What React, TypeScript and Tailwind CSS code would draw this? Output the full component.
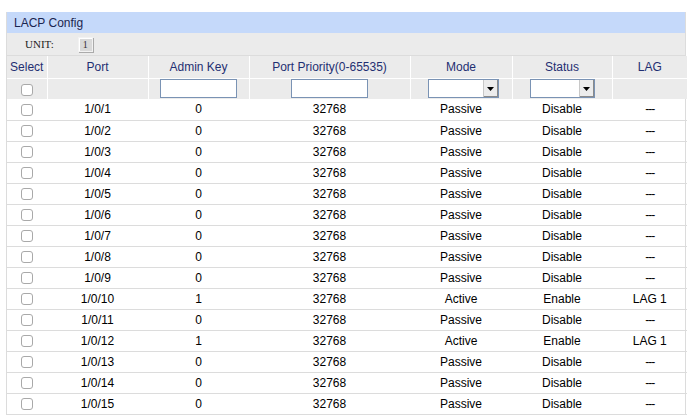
import React from 'react'

type Row = { port: string; key: number; mode: string; status: string; lag: string }

const rows: Row[] = Array.from({ length: 15 }, (_, i) => {
  const n = i + 1
  const active = n === 10 || n === 12
  return {
    port: `1/0/${n}`,
    key: active ? 1 : 0,
    mode: active ? 'Active' : 'Passive',
    status: active ? 'Enable' : 'Disable',
    lag: active ? 'LAG 1' : '---',
  }
})

function Check() {
  return <span className="inline-block w-[12px] h-[12px] rounded-[3px] border border-[#a9a9a9] bg-white align-middle" />
}

function Select({ w }: { w: string }) {
  return (
    <span className={`inline-flex items-stretch h-[19px] border border-[#7a93b4] bg-white align-middle ${w}`}>
      <span className="flex-1" />
      <span className="w-[15px] flex items-center justify-center bg-[#ececec] border-l border-[#c8c8c8] shadow-[inset_-1px_-1px_0_#8a8a8a]">
        <svg width="7" height="4" viewBox="0 0 7 4"><path d="M0 0h7L3.5 4z" fill="#000" /></svg>
      </span>
    </span>
  )
}

const head = 'h-[22px] border-r border-white text-[#1f2f72] font-normal'
const cell = 'h-[21px] border-b border-[#dcdcdc] border-r border-r-white'

export default function App() {
  return (
    <div className="w-[692px] h-[419px] bg-white pt-[12px] pl-[6px] font-['Liberation_Sans',Arial,sans-serif] text-[12px] text-black">
      <div className="w-[680px] border-l border-r border-[#dcdcdc]">
        <div className="h-[21px] bg-[#c5d9fa] pl-[7px] flex items-center text-[#1a2550] text-[12px]">LACP Config</div>
        <div className="h-[23px] bg-[#ebebeb] border-b border-[#dcdcdc] flex items-center pl-[18px] font-['Liberation_Serif',serif] text-[11px] text-[#222]">
          <span>UNIT:</span>
          <span className="ml-[24px] w-[15px] h-[15px] bg-[#d9d9d9] border border-[#f2f2f2] shadow-[inset_1px_1px_0_#fff,1px_1px_0_#aaa] flex items-center justify-center text-[10px] text-[#333]">1</span>
        </div>
        <table className="w-[680px] border-collapse table-fixed text-center">
          <colgroup>
            <col className="w-[40px]" />
            <col className="w-[101px]" />
            <col className="w-[101px]" />
            <col className="w-[161px]" />
            <col className="w-[102px]" />
            <col className="w-[100px]" />
            <col className="w-[75px]" />
          </colgroup>
          <thead>
            <tr className="bg-[#ebebeb] border-b border-white">
              <th className={head}>Select</th>
              <th className={head}>Port</th>
              <th className={head}>Admin Key</th>
              <th className={head}>Port Priority(0-65535)</th>
              <th className={head}>Mode</th>
              <th className={head}>Status</th>
              <th className="h-[22px] text-[#1f2f72] font-normal">LAG</th>
            </tr>
            <tr className="bg-[#ebebeb]">
              <td className="h-[21px] border-r border-white"><Check /></td>
              <td className="border-r border-white" />
              <td className="border-r border-white">
                <span className="inline-block align-middle w-[77px] h-[19px] border border-[#7a93b4] bg-white" />
              </td>
              <td className="border-r border-white">
                <span className="inline-block align-middle w-[77px] h-[19px] border border-[#7a93b4] bg-white" />
              </td>
              <td className="border-r border-white pl-[17px] text-left"><Select w="w-[71px]" /></td>
              <td className="border-r border-white pl-[17px] text-left"><Select w="w-[65px]" /></td>
              <td />
            </tr>
          </thead>
          <tbody>
            {rows.map((r) => (
              <tr key={r.port}>
                <td className={cell}><Check /></td>
                <td className={cell}>{r.port}</td>
                <td className={cell}>{r.key}</td>
                <td className={cell}>32768</td>
                <td className={cell}>{r.mode}</td>
                <td className={cell}>{r.status}</td>
                <td className="h-[21px] border-b border-[#dcdcdc]">
                  {r.lag === '---' ? <span className="tracking-[-1px]">---</span> : r.lag}
                </td>
              </tr>
            ))}
          </tbody>
        </table>
      </div>
    </div>
  )
}
